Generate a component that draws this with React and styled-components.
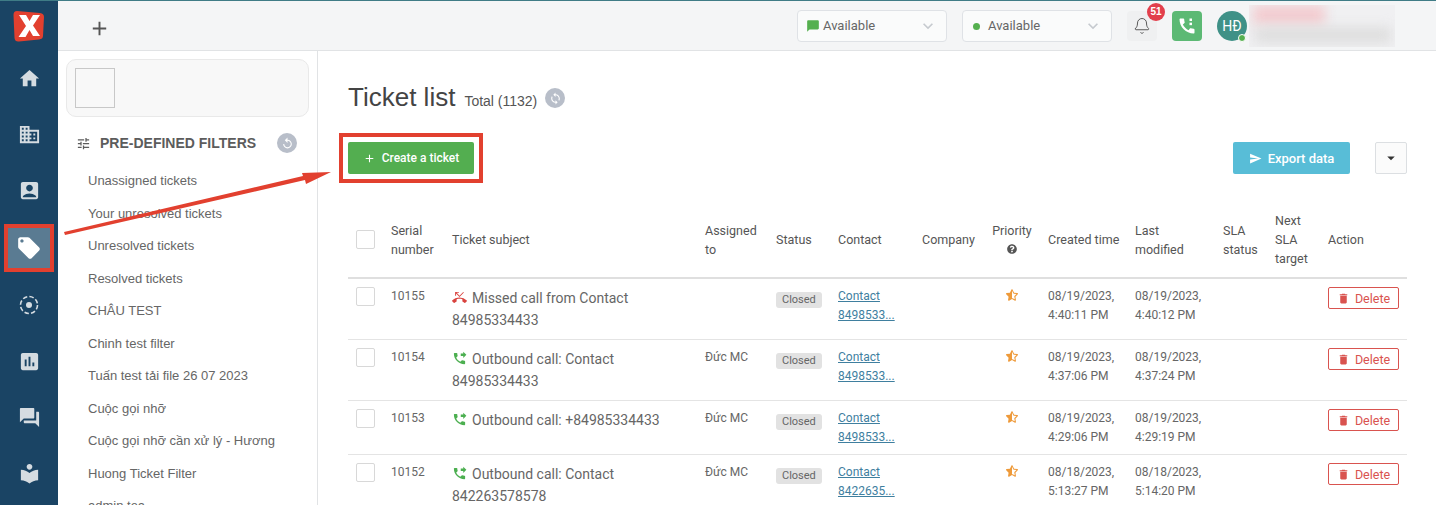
import React from 'react';
import styled, { createGlobalStyle } from 'styled-components';
import {
  MdHome, MdDomain, MdAccountBox, MdLocalOffer, MdAssessment, MdForum, MdLocalLibrary,
  MdTune, MdReplay, MdSync, MdAdd, MdSend, MdArrowDropDown, MdDelete, MdPhoneMissed,
  MdPhoneForwarded, MdChatBubble, MdKeyboardArrowDown,
} from 'react-icons/md';
import { FaStarHalfAlt, FaQuestionCircle } from 'react-icons/fa';
import { Bell } from 'lucide-react';

const Global = createGlobalStyle`
  html, body { margin: 0; padding: 0; height: 100%; overflow: hidden; background: #fff; }
  body { font-family: "Liberation Sans", Arial, sans-serif; color: #555; }
`;

const Page = styled.div`
  position: relative;
  display: flex;
  width: 1436px;
  height: 505px;
  overflow: hidden;
  border-top: 1px solid #3f7c86;
  box-sizing: border-box;
`;

const Rail = styled.nav`
  width: 58px;
  flex: none;
  background: #1a4464;
  display: flex;
  flex-direction: column;
  align-items: center;
  padding-top: 9px;
  box-sizing: border-box;
`;

const Logo = styled.svg`
  width: 32px;
  height: 32px;
  margin-bottom: 8px;
`;

const RailItem = styled.div`
  width: 42px;
  height: ${p => (p.$active ? '40px' : '56px')};
  margin: ${p => (p.$active ? '10px 0 9px' : '0')};
  display: flex;
  align-items: center;
  justify-content: center;
  color: #d5dce1;
  font-size: 23px;
  background: ${p => (p.$active ? '#5a7b92' : 'transparent')};
  ${p => p.$active && 'color: #fff; outline: 4px solid #e2402f;'}
`;

const Main = styled.div`
  flex: 1;
  min-width: 0;
  display: flex;
  flex-direction: column;
`;

const TopBar = styled.header`
  height: 50px;
  flex: none;
  box-sizing: border-box;
  background: #f4f5f6;
  border-bottom: 1px solid #e1e3e5;
  display: flex;
  align-items: center;
  padding: 0 41px 0 30px;
`;

const PlusButton = styled.div`
  display: flex;
  font-size: 23px;
  color: #555;
  margin-right: auto;
  margin-top: 6px;
`;

const Select = styled.div`
  width: 150px;
  height: 32px;
  box-sizing: border-box;
  margin-left: 15px;
  background: #fafbfb;
  border: 1px solid #dfe2e6;
  border-radius: 4px;
  display: flex;
  align-items: center;
  padding: 0 8px;
  gap: 3px;
  font-family: Roboto, sans-serif;
  font-size: 13px;
  color: #666;
  svg:last-child { margin-left: auto; color: #c6cacf; font-size: 20px; }
`;

const GreenDot = styled.span`
  width: 7px;
  height: 7px;
  border-radius: 50%;
  background: #55b04f;
  margin: 1px 5px 0 2px;
`;

const BellBox = styled.div`
  position: relative;
  width: 30px;
  height: 30px;
  margin-left: 15px;
  background: #eff0f1;
  border-radius: 4px;
  display: flex;
  align-items: center;
  justify-content: center;
  color: #555;
`;

const Badge = styled.span`
  position: absolute;
  top: -8px;
  right: -8px;
  width: 18px;
  height: 18px;
  border-radius: 50%;
  background: #e23f4c;
  color: #fff;
  font: bold 10px/18px "Liberation Sans", sans-serif;
  text-align: center;
`;

const PhoneBox = styled.div`
  width: 30px;
  height: 30px;
  margin-left: 15px;
  background: #5cb974;
  border-radius: 4px;
  display: flex;
  align-items: center;
  justify-content: center;
`;

const Avatar = styled.div`
  position: relative;
  width: 30px;
  height: 30px;
  flex: none;
  margin-left: 15px;
  border-radius: 50%;
  background: #3f9187;
  color: #fff;
  font: 14px/30px Roboto, sans-serif;
  text-align: center;
  &::after {
    content: '';
    position: absolute;
    right: 1px;
    bottom: -1px;
    width: 6px;
    height: 6px;
    background: #55b04f;
    border: 1px solid #fff;
    border-radius: 50%;
  }
`;

const BlurredName = styled.div`
  position: relative;
  width: 146px;
  height: 42px;
  margin-left: 2px;
  overflow: hidden;
  background: #f0f0f2;
`;

const BlurBar = styled.div`
  position: absolute;
  left: ${p => p.$x}px;
  top: ${p => p.$y}px;
  width: ${p => p.$w}px;
  height: ${p => p.$h}px;
  background: ${p => p.$c};
  filter: blur(6px);
`;

const Body = styled.div`
  flex: 1;
  min-height: 0;
  display: flex;
`;

const FilterPanel = styled.aside`
  width: 260px;
  flex: none;
  box-sizing: border-box;
  border-right: 1px solid #e1e3e5;
  padding: 8px 8px 0;
  overflow: hidden;
`;

const LogoCard = styled.div`
  height: 58px;
  width: 243px;
  box-sizing: border-box;
  background: #f8f8f8;
  border: 1px solid #e9e9e9;
  border-radius: 10px;
  padding: 8px;
`;

const LogoBox = styled.div`
  width: 40px;
  height: 40px;
  box-sizing: border-box;
  border: 1px solid #c8c8c8;
`;

const FilterHead = styled.div`
  display: flex;
  align-items: center;
  margin: 15px 0 11px;
  padding-left: 10px;
  height: 22px;
  font-size: 14px;
  font-weight: bold;
  color: #5c5c5c;
`;

const TuneIcon = styled(MdTune)`
  font-size: 15px;
  margin-right: 9px;
`;

const RoundIcon = styled.span`
  width: 20px;
  height: 20px;
  border-radius: 50%;
  background: #b8bec9;
  color: #fff;
  display: inline-flex;
  align-items: center;
  justify-content: center;
  font-size: 13px;
  margin-left: ${p => p.$gap}px;
`;

const FilterList = styled.ul`
  list-style: none;
  margin: 0;
  padding: 0 0 0 22px;
`;

const FilterItem = styled.li`
  height: 32.5px;
  line-height: 32.5px;
  font-size: 13px;
  color: #666;
  white-space: nowrap;
`;

const Content = styled.main`
  flex: 1;
  min-width: 0;
  padding: 27px 29px 0 30px;
`;

const TitleRow = styled.div`
  display: flex;
  align-items: baseline;
  height: 38px;
`;

const Title = styled.h1`
  margin: 0;
  font-size: 26px;
  line-height: 38px;
  font-weight: normal;
  color: #444;
`;

const Total = styled.span`
  margin-left: 9px;
  font-size: 14px;
  color: #555;
`;

const SyncIcon = styled(RoundIcon)`
  align-self: center;
  margin-top: 2px;
`;

const Actions = styled.div`
  display: flex;
  align-items: center;
  margin-top: 26px;
  height: 32px;
`;

const Button = styled.button`
  height: 32px;
  box-sizing: border-box;
  border: 0;
  border-radius: 2px;
  display: inline-flex;
  align-items: center;
  justify-content: center;
  gap: 6px;
  color: #fff;
  font-family: Roboto, sans-serif;
  font-size: ${p => p.$fs}px;
  font-weight: 500;
  background: ${p => p.$color};
  width: ${p => p.$w}px;
`;

const CreateWrap = styled.div`
  display: flex;
  outline: 4px solid #e2402f;
  outline-offset: 5px;
  margin-right: auto;
`;

const CaretButton = styled.button`
  width: 32px;
  height: 32px;
  margin-left: 25px;
  padding: 0;
  box-sizing: border-box;
  border: 1px solid #dcdfe2;
  border-radius: 2px;
  background: #fbfbfb;
  color: #333;
  font-size: 18px;
  display: inline-flex;
  align-items: center;
  justify-content: center;
`;

const Table = styled.table`
  table-layout: fixed;
  border-collapse: collapse;
  width: 1059px;
  margin-top: 30px;
  font-family: Roboto, sans-serif;
  font-size: 12px;
  line-height: 19px;
  color: #666;
`;

const Th = styled.th`
  padding: 7px 8px 9px;
  font-size: 12.5px;
  font-weight: normal;
  text-align: ${p => (p.$center ? 'center' : 'left')};
  white-space: ${p => (p.$nowrap ? 'nowrap' : 'normal')};
  vertical-align: middle;
  color: #555;
  border-bottom: 2px solid #dfdfdf;
`;

const Tr = styled.tr`
  border-bottom: 1px solid #e4e4e4;
`;

const Td = styled.td`
  padding: 8px 8px 7px;
  vertical-align: top;
  text-align: ${p => (p.$center ? 'center' : 'left')};
`;

const Check = styled.span`
  display: block;
  width: 19px;
  height: 19px;
  box-sizing: border-box;
  border: 1px solid #d8d8d8;
  border-radius: 2px;
  background: #fff;
`;

const Subject = styled.div`
  font-size: 14px;
  line-height: 22px;
  margin-bottom: 1px;
  svg { vertical-align: -2px; margin-right: 5px; font-size: 15px; color: ${p => p.$color}; }
`;

const StatusTag = styled.span`
  display: inline-block;
  background: #e2e2e2;
  border-radius: 3px;
  padding: 0 6px;
  font-size: 11px;
  line-height: 16px;
  color: #666;
  margin-top: 5px;
`;

const ContactLink = styled.a`
  color: #3f7f9f;
  text-decoration: underline;
`;

const Star = styled(FaStarHalfAlt)`
  color: #ee9a3a;
  font-size: 12px;
  vertical-align: -1px;
`;

const DeleteButton = styled.button`
  width: 71px;
  height: 22px;
  padding: 0;
  box-sizing: border-box;
  border: 1px solid #d9534f;
  border-radius: 2px;
  background: #fff;
  color: #d9534f;
  font: 12.5px Roboto, sans-serif;
  display: inline-flex;
  align-items: center;
  justify-content: center;
  gap: 5px;
  svg { font-size: 13px; }
`;

const ArrowLayer = styled.svg`
  position: absolute;
  left: 0;
  top: -1px;
  width: 1436px;
  height: 505px;
  pointer-events: none;
`;

const filters = [
  'Unassigned tickets', 'Your unresolved tickets', 'Unresolved tickets', 'Resolved tickets',
  'CHÂU TEST', 'Chinh test filter', 'Tuấn test tải file 26 07 2023', 'Cuộc gọi nhỡ',
  'Cuộc gọi nhỡ cần xử lý - Hương', 'Huong Ticket Filter', 'admin tea',
];

const widths = [35, 61, 253, 71, 62, 84, 70, 56, 87, 88, 52, 53, 87];

const tickets = [
  { id: 10155, missed: true, subject: 'Missed call from Contact 84985334433', owner: '', contact: '8498533...', created: '4:40:11 PM', modified: '4:40:12 PM', date: '08/19/2023,' },
  { id: 10154, subject: 'Outbound call: Contact 84985334433', owner: 'Đức MC', contact: '8498533...', created: '4:37:06 PM', modified: '4:37:24 PM', date: '08/19/2023,' },
  { id: 10153, subject: 'Outbound call: +84985334433', owner: 'Đức MC', contact: '8498533...', created: '4:29:06 PM', modified: '4:29:19 PM', date: '08/19/2023,' },
  { id: 10152, subject: 'Outbound call: Contact 842263578578', owner: 'Đức MC', contact: '8422635...', created: '5:13:27 PM', modified: '5:14:20 PM', date: '08/18/2023,' },
];

function DashedTarget() {
  return (
    <svg width="22" height="22" viewBox="0 0 22 22" fill="none">
      <circle cx="11" cy="11" r="8.5" stroke="currentColor" strokeWidth="1.6" strokeDasharray="4.5 2.2" />
      <circle cx="11" cy="11" r="3" fill="currentColor" />
    </svg>
  );
}

function PhoneDots() {
  return (
    <svg width="20" height="20" viewBox="0 0 24 24" fill="#fff">
      <path d="M20.01 15.38c-1.23 0-2.42-.2-3.53-.56-.35-.12-.74-.03-1.01.24l-1.57 1.97c-2.83-1.35-5.48-3.9-6.89-6.83l1.95-1.66c.27-.28.35-.67.24-1.02-.37-1.11-.56-2.3-.56-3.53 0-.54-.45-.99-.99-.99H4.19C3.65 3 3 3.24 3 3.99 3 13.28 10.73 21 20.01 21c.71 0 .99-.63.99-1.18v-3.45c0-.54-.45-.99-.99-.99z" />
      <rect x="15" y="3" width="3" height="3" />
      <rect x="15" y="8" width="3" height="3" />
    </svg>
  );
}

export default function App() {
  return (
    <>
      <Global />
      <Page>
        <Rail>
          <Logo viewBox="0 0 32 32">
            <path d="M4 1 L27 3 Q31 3.500 31 7 L30 26 Q30 29 26 29.500 L6 31.500 Q2 32 1.500 28 L0.500 5 Q0.500 1 4 1 Z" fill="#e2402f" />
            <path d="M6 5 H13 L16.500 11 L20 5 H27 L20 15.500 L27 26 H20 L16.500 20 L12.500 27 H5.500 L13 16 Z" fill="#fff" />
          </Logo>
          <RailItem><MdHome /></RailItem>
          <RailItem><MdDomain /></RailItem>
          <RailItem><MdAccountBox /></RailItem>
          <RailItem $active><MdLocalOffer size={26} /></RailItem>
          <RailItem><DashedTarget /></RailItem>
          <RailItem><MdAssessment /></RailItem>
          <RailItem><MdForum /></RailItem>
          <RailItem><MdLocalLibrary /></RailItem>
        </Rail>
        <Main>
          <TopBar>
            <PlusButton><MdAdd /></PlusButton>
            <Select>
              <MdChatBubble color="#55b04f" size={14} />
              Available
              <MdKeyboardArrowDown />
            </Select>
            <Select>
              <GreenDot />
              Available
              <MdKeyboardArrowDown />
            </Select>
            <BellBox>
              <Bell size={18} strokeWidth={1.3} />
              <Badge>51</Badge>
            </BellBox>
            <PhoneBox><PhoneDots /></PhoneBox>
            <Avatar>HĐ</Avatar>
            <BlurredName>
              <BlurBar $x={4} $y={0} $w={72} $h={20} $c="#f3ccd0" />
              <BlurBar $x={6} $y={22} $w={136} $h={16} $c="#dedede" />
            </BlurredName>
          </TopBar>
          <Body>
            <FilterPanel>
              <LogoCard><LogoBox /></LogoCard>
              <FilterHead>
                <TuneIcon />
                PRE-DEFINED FILTERS
                <RoundIcon $gap={21}><MdReplay /></RoundIcon>
              </FilterHead>
              <FilterList>
                {filters.map(f => <FilterItem key={f}>{f}</FilterItem>)}
              </FilterList>
            </FilterPanel>
            <Content>
              <TitleRow>
                <Title>Ticket list</Title>
                <Total>Total (1132)</Total>
                <SyncIcon $gap={8}><MdSync /></SyncIcon>
              </TitleRow>
              <Actions>
                <CreateWrap>
                  <Button $color="#53ae50" $w={126} $fs={12}><MdAdd size={13} /> Create a ticket</Button>
                </CreateWrap>
                <Button $color="#58bdd7" $w={117} $fs={13}><MdSend size={13} /> Export data</Button>
                <CaretButton><MdArrowDropDown /></CaretButton>
              </Actions>
              <Table>
                <colgroup>
                  {widths.map((w, i) => <col key={i} width={w} />)}
                </colgroup>
                <thead>
                  <tr>
                    <Th><Check /></Th>
                    <Th>Serial number</Th>
                    <Th>Ticket subject</Th>
                    <Th>Assigned to</Th>
                    <Th>Status</Th>
                    <Th>Contact</Th>
                    <Th>Company</Th>
                    <Th $center>Priority <FaQuestionCircle size={10} /></Th>
                    <Th $nowrap>Created time</Th>
                    <Th>Last modified</Th>
                    <Th>SLA status</Th>
                    <Th>Next SLA target</Th>
                    <Th>Action</Th>
                  </tr>
                </thead>
                <tbody>
                  {tickets.map(t => (
                    <Tr key={t.id}>
                      <Td><Check /></Td>
                      <Td>{t.id}</Td>
                      <Td>
                        <Subject $color={t.missed ? '#d9433f' : '#4caf50'}>
                          {t.missed ? <MdPhoneMissed /> : <MdPhoneForwarded />}
                          {t.subject}
                        </Subject>
                      </Td>
                      <Td>{t.owner}</Td>
                      <Td><StatusTag>Closed</StatusTag></Td>
                      <Td>
                        <ContactLink href="#">Contact</ContactLink><br />
                        <ContactLink href="#">{t.contact}</ContactLink>
                      </Td>
                      <Td />
                      <Td $center><Star /></Td>
                      <Td>{t.date}<br />{t.created}</Td>
                      <Td>{t.date}<br />{t.modified}</Td>
                      <Td />
                      <Td />
                      <Td><DeleteButton><MdDelete /> Delete</DeleteButton></Td>
                    </Tr>
                  ))}
                </tbody>
              </Table>
            </Content>
          </Body>
        </Main>
        <ArrowLayer viewBox="0 0 1436 505">
          <polygon points="64,232 303,176 302,173 331,172 306,184 305,180 65,235" fill="#e2402f" />
        </ArrowLayer>
      </Page>
    </>
  );
}
